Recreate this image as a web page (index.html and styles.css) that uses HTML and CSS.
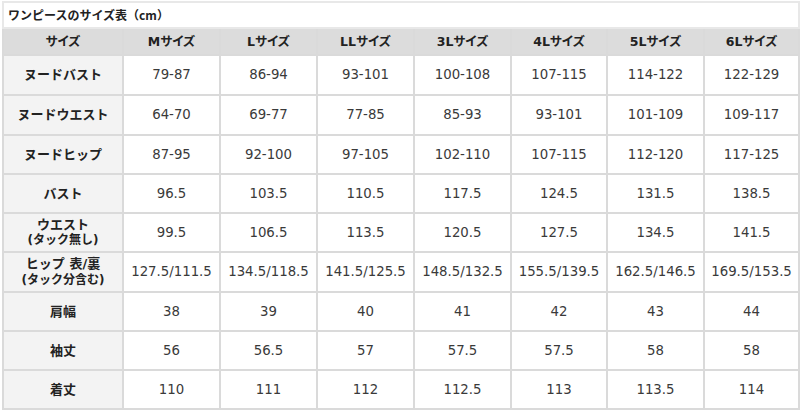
FILE: index.html
```html
<!DOCTYPE html>
<html lang="ja">
<head>
<meta charset="utf-8">
<title>ワンピースのサイズ表</title>
<link rel="stylesheet" href="styles.css">
</head>
<body>
<div class="wrap">
<table class="size-table">
  <colgroup>
    <col class="c-label"><col class="c97"><col class="c97"><col class="c97"><col class="c97"><col class="c96"><col class="c97"><col class="c95">
  </colgroup>
  <tr class="r-title"><td class="title" colspan="8">ワンピースのサイズ表（cm）</td></tr>
  <tr class="r-head">
    <th>サイズ</th><th>Mサイズ</th><th>Lサイズ</th><th>LLサイズ</th><th>3Lサイズ</th><th>4Lサイズ</th><th>5Lサイズ</th><th>6Lサイズ</th>
  </tr>
  <tr class="r40"><th class="lbl">ヌードバスト</th><td>79-87</td><td>86-94</td><td>93-101</td><td>100-108</td><td>107-115</td><td>114-122</td><td>122-129</td></tr>
  <tr class="r40"><th class="lbl">ヌードウエスト</th><td>64-70</td><td>69-77</td><td>77-85</td><td>85-93</td><td>93-101</td><td>101-109</td><td>109-117</td></tr>
  <tr class="r39"><th class="lbl">ヌードヒップ</th><td>87-95</td><td>92-100</td><td>97-105</td><td>102-110</td><td>107-115</td><td>112-120</td><td>117-125</td></tr>
  <tr class="r39"><th class="lbl">バスト</th><td>96.5</td><td>103.5</td><td>110.5</td><td>117.5</td><td>124.5</td><td>131.5</td><td>138.5</td></tr>
  <tr class="r39"><th class="lbl">ウエスト<span class="sub">(タック無し)</span></th><td>99.5</td><td>106.5</td><td>113.5</td><td>120.5</td><td>127.5</td><td>134.5</td><td>141.5</td></tr>
  <tr class="r40"><th class="lbl">ヒップ 表/裏<span class="sub">(タック分含む)</span></th><td>127.5/111.5</td><td>134.5/118.5</td><td>141.5/125.5</td><td>148.5/132.5</td><td>155.5/139.5</td><td>162.5/146.5</td><td>169.5/153.5</td></tr>
  <tr class="r39"><th class="lbl">肩幅</th><td>38</td><td>39</td><td>40</td><td>41</td><td>42</td><td>43</td><td>44</td></tr>
  <tr class="r39"><th class="lbl">袖丈</th><td>56</td><td>56.5</td><td>57</td><td>57.5</td><td>57.5</td><td>58</td><td>58</td></tr>
  <tr class="r39"><th class="lbl">着丈</th><td>110</td><td>111</td><td>112</td><td>112.5</td><td>113</td><td>113.5</td><td>114</td></tr>
</table>
</div>
</body>
</html>
```

FILE: styles.css
```css
html, body {
  margin: 0;
  padding: 0;
  background: #ffffff;
}
body {
  font-family: "DejaVu Sans", "Noto Sans CJK JP", sans-serif;
  color: #333333;
}
.wrap {
  padding: 1px 2px 0 2px;
}
.size-table {
  width: 796px;
  border-collapse: collapse;
  table-layout: fixed;
  font-size: 13.3px;
}
.c-label { width: 120px; }
.c97 { width: 97px; }
.c96 { width: 96px; }
.c95 { width: 95px; }
.size-table td,
.size-table th {
  border: 2px solid #dadada;
  text-align: center;
  vertical-align: middle;
  padding: 0;
  line-height: 1.2;
}
.size-table td {
  color: #3a3a3a;
  font-weight: normal;
}
.size-table th {
  font-family: "DejaVu Sans", "Noto Sans CJK JP", sans-serif;
  font-weight: bold;
  font-size: 12.5px;
  color: #222222;
}
.r-head th {
  background: #dcdcdc;
  font-feature-settings: "palt";
}
.size-table th.lbl {
  background: #f3f3f3;
  font-size: 13px;
}
.r-title { height: 26px; }
.r-head { height: 27px; }
.r40 { height: 40px; }
.r39 { height: 39px; }
.size-table td.title {
  text-align: left;
  padding-left: 4px;
  font-size: 12px;
  font-weight: bold;
  color: #222222;
  background: #ffffff;
  font-family: "Noto Sans CJK JP", sans-serif;
  border-color: #e8e8e8;
}
.sub {
  display: block;
  font-size: 12px;
  line-height: 1.35;
}
```
